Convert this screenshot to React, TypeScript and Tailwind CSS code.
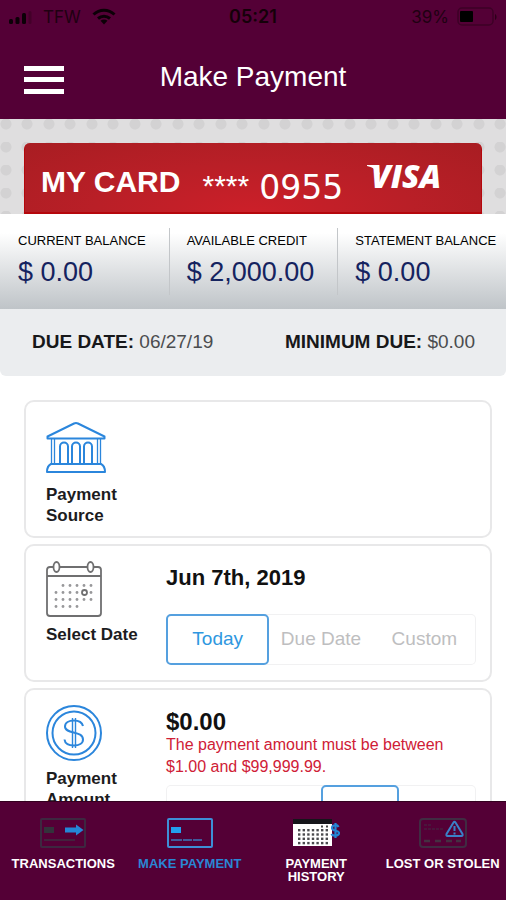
import React, { useState } from "react";

const DATE_OPTIONS = ["Today", "Due Date", "Custom"];
const AMOUNT_OPTIONS = ["Min", "Balance", "Statement", "Other"];

function StatusBar() {
  return (
    <div className="grid h-[34px] grid-cols-3 items-center px-2 font-['Inter',sans-serif] text-[17px] leading-none text-[#1f0012]">
      <div className="flex items-center gap-[11px]">
        <svg width="24" height="14" viewBox="0 0 24 14" fill="#0c0007">
          <rect x="1" y="9" width="4" height="5" rx="1.5" />
          <rect x="7.5" y="7" width="4" height="7" rx="1.5" />
          <rect x="14" y="3" width="4" height="11" rx="1.5" />
          <rect x="20.5" y="1" width="3" height="13" rx="1.5" fill="#430029" />
        </svg>
        <span>TFW</span>
        <svg
          width="24"
          height="18"
          viewBox="0 0 24 18"
          fill="none"
          stroke="#0c0007"
          strokeWidth="3"
        >
          <path d="M1.5 6.5C7.5 .8 16.500 .8 22.500 6.500" />
          <path d="M6 10.500c3.500-3 8.500-3 12 0" />
          <path d="M8.500 12.800c2-1.700 5-1.700 7 0L12 16.500z" fill="#0c0007" stroke="none" />
        </svg>
      </div>
      <span className="text-center text-[18px] font-semibold text-[#150009]">
        05:21
      </span>
      <div className="flex items-center justify-end gap-2">
        <span>39%</span>
        <svg width="41" height="20" viewBox="0 0 41 20">
          <rect
            x="1"
            y="1"
            width="35"
            height="17"
            rx="4"
            fill="none"
            stroke="#3d0026"
            strokeWidth="1.5"
          />
          <rect x="3" y="4" width="13" height="11" rx="1" fill="#000" />
          <path d="M38 7c2 1 2 5 0 6z" fill="#2b0019" />
        </svg>
      </div>
    </div>
  );
}

function Header() {
  return (
    <header className="flex-shrink-0 bg-[#540036]">
      <StatusBar />
      <div className="flex h-[85px] items-center px-6">
        <button aria-label="Menu" className="w-10 pt-1.5">
          <svg width="40" height="28" viewBox="0 0 40 28" fill="#fff">
            <rect y="0" width="40" height="5" />
            <rect y="11" width="40" height="5" />
            <rect y="23" width="40" height="5" />
          </svg>
        </button>
        <h1 className="flex-1 text-center text-[28px] leading-8 text-white">
          Make Payment
        </h1>
        <div className="w-10" />
      </div>
    </header>
  );
}

function CardBanner() {
  return (
    <section className="bg-[#dfdedf] bg-[radial-gradient(circle_at_6px_5px,#d3d2d3_5px,transparent_6px),radial-gradient(circle_at_27px_5px,#d3d2d3_5px,transparent_6px)] bg-[length:43px_23px] px-6 pt-6">
      <div className="flex h-[71px] items-center rounded-t-md border-x border-b-2 border-[#b5070c] bg-[radial-gradient(ellipse_at_50%_100%,#cc1f29_0%,#b91f27_50%,#a81d22_100%)] pl-4 text-[30px] leading-8 text-white">
        <span className="pt-2 font-bold">MY CARD</span>
        <span className="pt-4 pl-[22px]">****</span>
        <span className="pt-5 pl-[10px] font-['DejaVu_Sans',sans-serif] text-[33px]">
          0955
        </span>
        <svg
          className="mb-1 ml-[22px]"
          width="78"
          height="46"
          viewBox="0 -10 78 46"
          fill="#fff"
        >
          <text
            x="6"
            y="25"
            fontFamily="Open Sans, sans-serif"
            fontSize="32"
            fontWeight="800"
            fontStyle="italic"
          >
            VISA
          </text>
          <path d="M2 2h10l3 10C11 6 7 4 2 3z" />
        </svg>
      </div>
    </section>
  );
}

function Balance({ label, value }: { label: string; value: string }) {
  return (
    <div className="border-l border-[#c3c6c9] pt-[5px] pb-[7px] pl-[17px] whitespace-nowrap first:border-transparent">
      <p className="text-[13px] leading-4 text-black">{label}</p>
      <p className="mt-[7px] text-[27px] leading-8 text-[#15235f]">{value}</p>
    </div>
  );
}

function Balances() {
  return (
    <section className="grid grid-cols-3 bg-linear-to-b from-white from-20% to-[#bfc4c8] py-[14px]">
      <Balance label="CURRENT BALANCE" value="$ 0.00" />
      <Balance label="AVAILABLE CREDIT" value="$ 2,000.00" />
      <Balance label="STATEMENT BALANCE" value="$ 0.00" />
    </section>
  );
}

function BankIcon() {
  return (
    <svg
      width="60"
      height="60"
      viewBox="0 0 60 60"
      fill="none"
      stroke="#2b86dc"
      strokeWidth="2"
      strokeLinejoin="round"
    >
      <path d="M1.500 19.500L28 6.500q2-1 4 0L58.500 19.500v2h-57z" />
      <path d="M5.500 22v25M8.500 22v25M51.500 22v25M54.500 22v25" strokeWidth="1.300" />
      <path d="M14 47V29.500a4 4 0 0 1 8 0V47M26 47V29.500a4 4 0 0 1 8 0V47M38 47V29.500a4 4 0 0 1 8 0V47" />
      <path d="M5 47h50q4 2 4 8H1q0-6 4-8z" />
    </svg>
  );
}

function CalendarIcon() {
  const rows = [
    [17, 24, 31, 38, 45],
    [10, 17, 24, 31, 45],
    [10, 17, 24, 31, 38, 45],
    [10, 17, 24, 31],
  ];
  return (
    <svg
      width="56"
      height="56"
      viewBox="0 0 56 56"
      fill="none"
      stroke="#6f6f70"
      strokeWidth="1.800"
    >
      <path d="M7 6H4q-3 0-3 3v43q0 3 3 3h48q3 0 3-3V9q0-3-3-3h-4M14 6h27M1 15h54" />
      <ellipse cx="10.500" cy="6" rx="3" ry="5" />
      <ellipse cx="44.500" cy="6" rx="3" ry="5" />
      <circle cx="38.500" cy="31.500" r="2.500" />
      <g fill="#98989a" stroke="none">
        {rows.map((row, i) =>
          row.map((x) => (
            <circle key={`${i}-${x}`} cx={x} cy={24.5 + i * 7} r="1.400" />
          )),
        )}
      </g>
    </svg>
  );
}

function DollarIcon() {
  return (
    <svg
      width="56"
      height="56"
      viewBox="0 0 56 56"
      fill="none"
      stroke="#2b86dc"
      strokeWidth="2"
    >
      <circle cx="28" cy="28" r="27" />
      <circle cx="28" cy="28" r="21.500" />
      <path d="M37 21c-1-4-4.500-5.500-9-5.500-5 0-9 2-9 6 0 8 18 4 18 13 0 4-4 6-9 6s-9-2-9.500-6" />
      <path d="M26.500 13v30M29.500 13v30" strokeWidth="1.400" />
    </svg>
  );
}

function Panel({
  icon,
  title,
  children,
}: {
  icon: React.ReactNode;
  title: string;
  children?: React.ReactNode;
}) {
  return (
    <section className="flex min-h-[138px] rounded-[10px] border-2 border-[#e8e8e9] bg-white pr-[14px] pb-[10px] pl-5">
      <div className="w-[120px] flex-shrink-0 pt-[15px]">
        {icon}
        <h2 className="mt-[7px] max-w-[100px] text-[17px] leading-[21px] font-bold text-[#1c1c1e]">
          {title}
        </h2>
      </div>
      <div className="min-w-0 flex-1 pt-5">{children}</div>
    </section>
  );
}

function Segmented({
  options,
  value,
  onChange,
  showLabels = true,
}: {
  options: string[];
  value: string;
  onChange: (v: string) => void;
  showLabels?: boolean;
}) {
  return (
    <div className="grid h-[51px] auto-cols-fr grid-flow-col rounded-[5px] shadow-[inset_0_0_0_1px_#f1f1f2]">
      {options.map((o) => (
        <button
          key={o}
          aria-label={o}
          onClick={() => onChange(o)}
          className={`min-w-0 rounded-[5px] text-[19px] whitespace-nowrap ${
            value === o
              ? "border-2 border-[#55a0df] text-[#2e97e0]"
              : "text-[#bebec0]"
          }`}
        >
          {showLabels && o}
        </button>
      ))}
    </div>
  );
}

function TransactionsIcon() {
  return (
    <svg width="46" height="30" viewBox="0 0 46 30" fill="none">
      <rect x="1" y="1" width="44" height="28" rx="1" stroke="#3d2840" strokeWidth="2" />
      <rect x="4" y="9" width="10" height="6" fill="#33333b" />
      <path d="M4 22h31" stroke="#3d2f40" strokeWidth="1.500" />
      <path d="M25 9.500h11V6.500l7.500 5.500-7.500 5.500v-3H25z" fill="#2487d6" />
    </svg>
  );
}

function PayIcon() {
  return (
    <svg width="46" height="30" viewBox="0 0 46 30" fill="none">
      <rect x="1" y="1" width="44" height="28" rx="1" stroke="#3d8fd6" strokeWidth="2" />
      <rect x="4" y="9" width="10" height="6" fill="#23a0ee" />
      <path d="M4 22h31" stroke="#3a78bd" strokeWidth="1.500" strokeDasharray="11 1 9 1" />
    </svg>
  );
}

function HistoryIcon() {
  const rows = [0, 1, 2, 3];
  const cols = [0, 1, 2, 3, 4, 5, 6];
  return (
    <svg width="48" height="30" viewBox="0 0 48 30" fill="none">
      <rect x="1" y="1" width="39" height="27" fill="#fff" />
      <rect x="1" y="1" width="39" height="5" fill="#15151a" />
      <path d="M29 8.500h2M34 8.500h2" stroke="#444" strokeWidth="2" />
      {rows.map((r) =>
        cols.map((c) => (
          <rect
            key={`${r}-${c}`}
            x={6 + c * 4.6}
            y={11 + r * 4.3}
            width="2.400"
            height="2.400"
            fill="#4a4a4e"
          />
        )),
      )}
      <path
        d="M46.500 9c-1-2.500-6.500-2.500-6.500 1s7 2 7 5-6.500 3.500-7.500.8M43.500 5v15"
        stroke="#2487d6"
        strokeWidth="2.200"
      />
    </svg>
  );
}

function LostIcon() {
  return (
    <svg width="48" height="30" viewBox="0 0 48 30" fill="none">
      <rect x="1" y="1" width="46" height="28" rx="3" stroke="#402c42" strokeWidth="2" />
      <path d="M5 7h7M5 11h20" stroke="#402c42" strokeDasharray="3 1" />
      <path d="M5 23h6M16 23h6M27 23h6M37 23h5" stroke="#443042" strokeWidth="2.500" />
      <path
        d="M34.500 4.500q1-1.500 2 0l7 11.500q.5 2-1 2h-14q-1.500 0-1-2z"
        fill="#540036"
        stroke="#3a80c8"
        strokeWidth="2"
        strokeLinejoin="round"
      />
      <path d="M35.500 8v5M35.500 14.500v2" stroke="#3a80c8" strokeWidth="2" />
    </svg>
  );
}

const TABS = [
  { label: "TRANSACTIONS", icon: <TransactionsIcon /> },
  { label: "MAKE PAYMENT", icon: <PayIcon /> },
  { label: "PAYMENT HISTORY", icon: <HistoryIcon /> },
  { label: "LOST OR STOLEN", icon: <LostIcon /> },
];

function TabBar() {
  return (
    <nav className="grid h-[99px] flex-shrink-0 grid-cols-4 border-t border-[#33001f] bg-[#540036] pt-4">
      {TABS.map((tab) => (
        <a
          key={tab.label}
          href="#"
          className={`flex flex-col items-center gap-[9px] px-1 text-center text-[13px] leading-[13px] font-bold ${
            tab.label === "MAKE PAYMENT" ? "text-[#2a86d4]" : "text-white"
          }`}
        >
          {tab.icon}
          <span>{tab.label}</span>
        </a>
      ))}
    </nav>
  );
}

export default function App() {
  const [date, setDate] = useState("Today");
  const [amount, setAmount] = useState("Statement");

  return (
    <div className="flex h-screen flex-col overflow-hidden bg-white font-['Liberation_Sans',Arial,sans-serif]">
      <Header />
      <main className="min-h-0 flex-1 overflow-y-auto [scrollbar-width:none]">
        <CardBanner />
        <Balances />
        <section className="flex h-[67px] items-center justify-between rounded-b-md bg-[#ebedef] pr-[31px] pl-8 text-[19px] text-[#4a4c4e]">
          <p>
            <b className="text-[#17181a]">DUE DATE:</b> 06/27/19
          </p>
          <p>
            <b className="text-[#17181a]">MINIMUM DUE:</b> $0.00
          </p>
        </section>

        <div className="flex flex-col gap-[6px] pt-6 pr-[14px] pb-6 pl-6">
          <Panel icon={<BankIcon />} title="Payment Source" />
          <Panel icon={<CalendarIcon />} title="Select Date">
            <p className="mb-6 text-[22px] leading-6 font-bold text-[#111]">
              Jun 7th, 2019
            </p>
            <Segmented options={DATE_OPTIONS} value={date} onChange={setDate} />
          </Panel>
          <Panel icon={<DollarIcon />} title="Payment Amount">
            <p className="text-[24px] leading-6 font-bold text-[#111]">$0.00</p>
            <p className="mb-[7px] text-[16px] leading-[22px] text-[#cf2036]">
              The payment amount must be between $1.00 and $99,999.99.
            </p>
            <Segmented
              options={AMOUNT_OPTIONS}
              value={amount}
              onChange={setAmount}
              showLabels={false}
            />
          </Panel>
        </div>
      </main>
      <TabBar />
    </div>
  );
}
